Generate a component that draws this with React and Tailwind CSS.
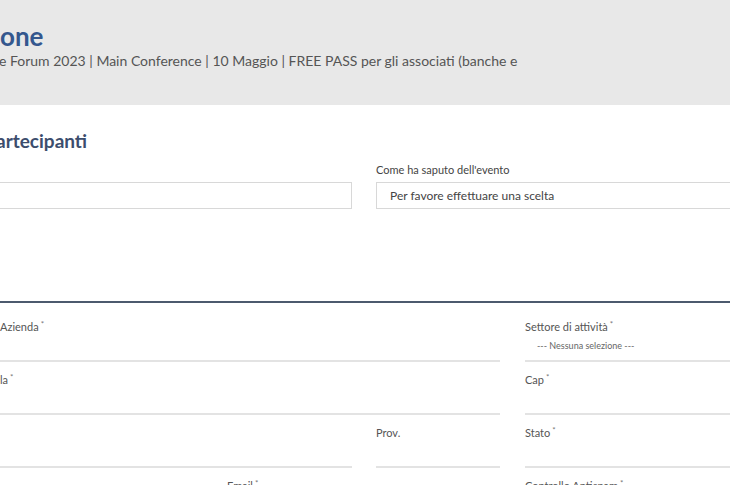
import React from "react";

function Label({ children, req }) {
  return (
    <div className="h-[16px] text-[11px] leading-[16px] text-[#555] whitespace-nowrap">
      {children}
      {req && <sup className="text-[8px] ml-[2px] text-[#777]">*</sup>}
    </div>
  );
}

function Field({ w, label, req, children, grow }) {
  return (
    <div className={(grow ? "flex-1 " : "shrink-0 ") + "pt-[10px]"} style={w ? { width: w } : undefined}>
      <Label req={req}>{label}</Label>
      <div className="h-[25px] relative">{children}</div>
      <div className="h-[2px] bg-[#e3e3e3]" />
    </div>
  );
}

export default function App() {
  return (
    <div
      className="w-[730px] h-[485px] overflow-hidden bg-white"
      style={{ fontFamily: "Lato, 'Open Sans', sans-serif" }}
    >
      <div className="h-[105px] bg-[#e8e8e8] pt-[21px]">
        <div className="h-[30px] text-[26px] leading-[30px] font-bold text-[#34578e] whitespace-nowrap">
          one
        </div>
        <div className="h-[20px] text-[14px] leading-[20px] text-[#555] whitespace-nowrap -ml-[1px]">
          e Forum 2023 | Main Conference | 10 Maggio | FREE PASS per gli associati (banche e
        </div>
      </div>

      <div className="pt-[24px]">
        <div className="h-[24px] text-[19px] leading-[24px] font-bold text-[#3c4d6d] whitespace-nowrap -ml-[4px]">
          artecipanti
        </div>
        <div className="flex mt-[9px]">
          <div className="w-[352px] shrink-0 pt-[20px]">
            <div className="h-[27px] border border-[#d8d8d8] border-l-0" />
          </div>
          <div className="ml-[24px] flex-1">
            <div className="h-[20px] text-[11px] leading-[16px] text-[#444] whitespace-nowrap">
              Come ha saputo dell'evento
            </div>
            <div className="h-[27px] border border-[#d8d8d8] border-r-0 pl-[13px] flex items-center text-[12px] text-[#444] whitespace-nowrap">
              Per favore effettuare una scelta
            </div>
          </div>
        </div>
      </div>

      <div className="mt-[92px] h-[2px] bg-[#4c5a6e]" />

      <div className="pt-[6px]">
        <div className="flex">
          <Field w={500} label=" Azienda" req />
          <div className="w-[25px] shrink-0" />
          <Field grow label="Settore di attività" req>
            <div className="pl-[12px] pt-[5px] text-[9px] leading-[12px] text-[#666] whitespace-nowrap">
              --- Nessuna selezione ---
            </div>
          </Field>
        </div>
        <div className="flex">
          <Field w={500} label="la" req />
          <div className="w-[25px] shrink-0" />
          <Field grow label="Cap" req />
        </div>
        <div className="flex">
          <Field w={352} label="" />
          <div className="w-[24px] shrink-0" />
          <Field w={124} label="Prov." />
          <div className="w-[25px] shrink-0" />
          <Field grow label="Stato" req />
        </div>
        <div className="flex">
          <Field w={202} label="" />
          <div className="w-[25px] shrink-0" />
          <Field w={273} label="Email" req />
          <div className="w-[25px] shrink-0" />
          <Field grow label="Controllo Antispam" req />
        </div>
      </div>
    </div>
  );
}
